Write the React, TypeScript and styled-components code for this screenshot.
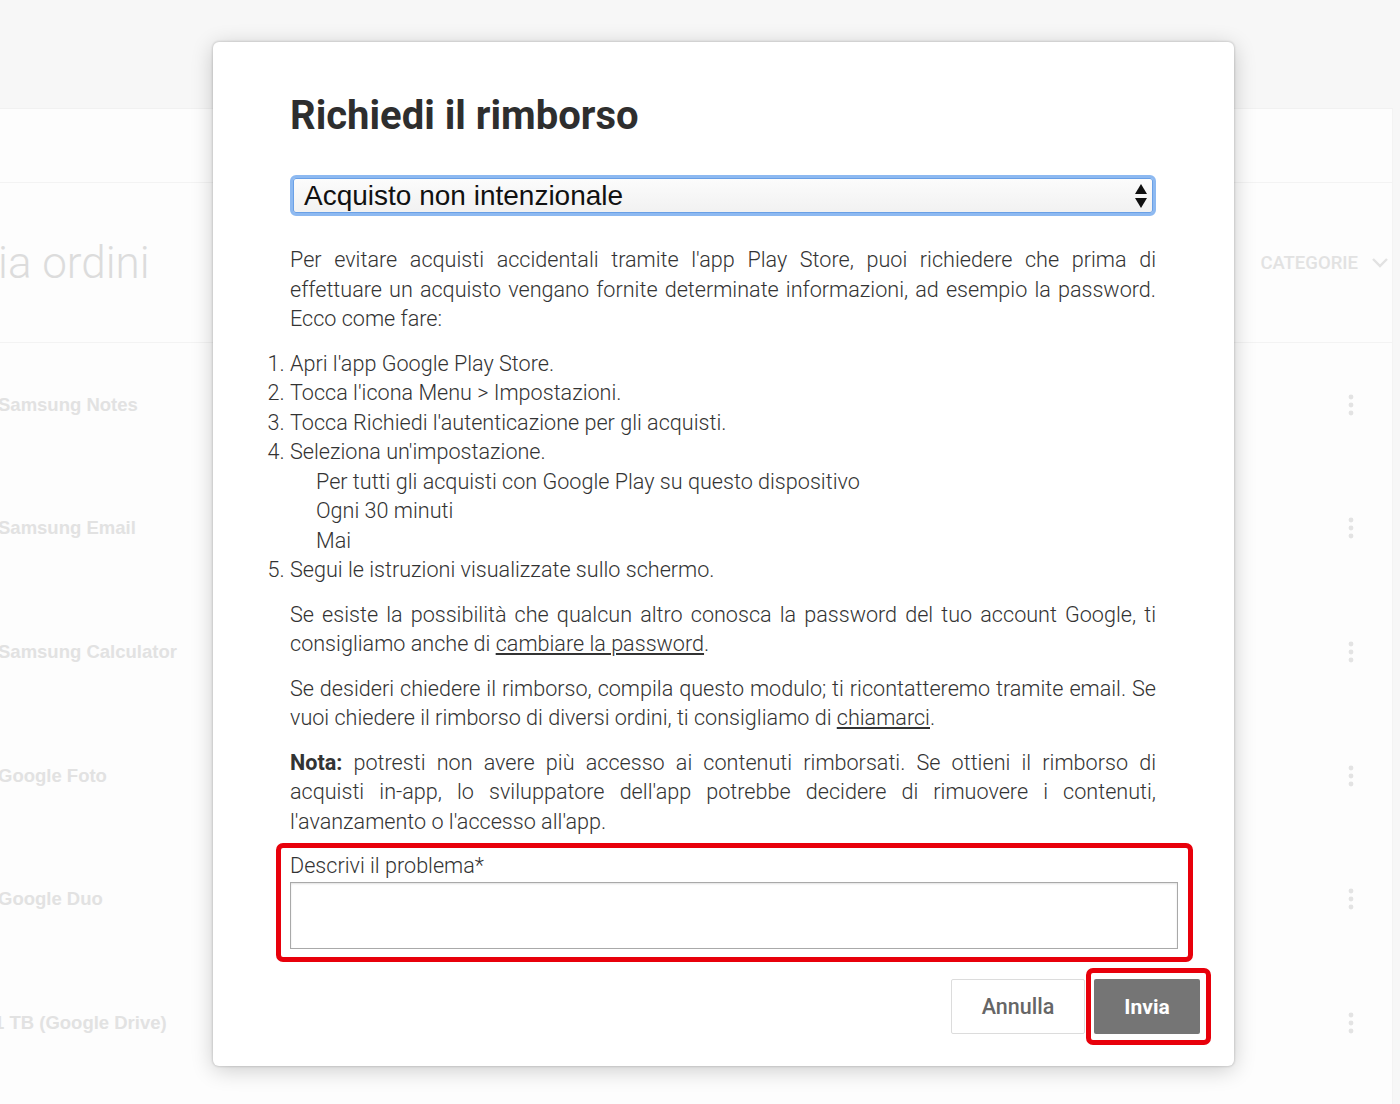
import React from 'react';
import styled, { createGlobalStyle } from 'styled-components';

const orders = [
  'Samsung Notes',
  'Samsung Email',
  'Samsung Calculator',
  'Google Foto',
  'Google Duo',
  '1 TB (Google Drive)',
];

const Global = createGlobalStyle`
  html, body {
    margin: 0;
    padding: 0;
    background: #f7f7f7;
    font-family: Roboto, 'Noto Sans', sans-serif;
    overflow: hidden;
  }
  * { box-sizing: border-box; }
`;

const MoreDots = () => (
  <svg width="8" height="24" viewBox="0 0 8 24">
    <circle cx="4" cy="4" r="2.4" fill="#e3e3e3" />
    <circle cx="4" cy="12" r="2.4" fill="#e3e3e3" />
    <circle cx="4" cy="20" r="2.4" fill="#e3e3e3" />
  </svg>
);

const SelectArrows = () => (
  <svg width="14" height="26" viewBox="0 0 14 26">
    <path d="M7 1 L13 11 L1 11 Z" fill="#111" />
    <path d="M1 15 L13 15 L7 25 Z" fill="#111" />
  </svg>
);

const App: React.FC = () => {
  return (
    <S.Page>
      <Global />
      <S.TopBar />
      <S.Card>
        <S.CardBand />
        <S.TitleRow>
          <S.PageTitle>ia ordini</S.PageTitle>
          <S.CategoryFilter>
            CATEGORIE
            <svg width="18" height="12" viewBox="0 0 18 12">
              <path d="M2 2 L9 9 L16 2" stroke="#e2e2e2" strokeWidth="2.4" fill="none" />
            </svg>
          </S.CategoryFilter>
        </S.TitleRow>
        {orders.map((name) => (
          <S.OrderRow key={name}>
            <S.AppName $cut={name.startsWith('1 TB')}>{name}</S.AppName>
            <MoreDots />
          </S.OrderRow>
        ))}
      </S.Card>

      <S.Modal>
        <S.Title>Richiedi il rimborso</S.Title>
        <S.SelectBox>
          <span>Acquisto non intenzionale</span>
          <SelectArrows />
        </S.SelectBox>

        <S.Paragraph>
          Per evitare acquisti accidentali tramite l'app Play Store, puoi richiedere che prima di
          effettuare un acquisto vengano fornite determinate informazioni, ad esempio la password.
          Ecco come fare:
        </S.Paragraph>

        <S.Steps>
          <li>Apri l'app Google Play Store.</li>
          <li>Tocca l'icona Menu &gt; Impostazioni.</li>
          <li>Tocca Richiedi l'autenticazione per gli acquisti.</li>
          <li>
            Seleziona un'impostazione.
            <S.Options>
              <li>Per tutti gli acquisti con Google Play su questo dispositivo</li>
              <li>Ogni 30 minuti</li>
              <li>Mai</li>
            </S.Options>
          </li>
          <li>Segui le istruzioni visualizzate sullo schermo.</li>
        </S.Steps>

        <S.Paragraph>
          Se esiste la possibilità che qualcun altro conosca la password del tuo account Google, ti
          consigliamo anche di <S.Link>cambiare la password</S.Link>.
        </S.Paragraph>
        <S.Paragraph>
          Se desideri chiedere il rimborso, compila questo modulo; ti ricontatteremo tramite email. Se
          vuoi chiedere il rimborso di diversi ordini, ti consigliamo di <S.Link>chiamarci</S.Link>.
        </S.Paragraph>
        <S.Paragraph>
          <strong>Nota:</strong> potresti non avere più accesso ai contenuti rimborsati. Se ottieni il
          rimborso di acquisti in-app, lo sviluppatore dell'app potrebbe decidere di rimuovere i
          contenuti, l'avanzamento o l'accesso all'app.
        </S.Paragraph>

        <S.FieldHighlight>
          <S.FieldLabel>Descrivi il problema*</S.FieldLabel>
          <S.TextArea />
        </S.FieldHighlight>

        <S.Footer>
          <S.CancelButton>Annulla</S.CancelButton>
          <S.ButtonHighlight>
            <S.SubmitButton>Invia</S.SubmitButton>
          </S.ButtonHighlight>
        </S.Footer>
      </S.Modal>
    </S.Page>
  );
};

const S = {
  Page: styled.div`
    width: 1400px;
    height: 1104px;
    position: relative;
    overflow: hidden;
    display: flex;
    flex-direction: column;
  `,
  TopBar: styled.div`
    height: 108px;
    flex-shrink: 0;
    background: #f7f7f7;
  `,
  Card: styled.div`
    flex: 1;
    margin-right: 7px;
    background: #fdfdfd;
    border-top: 1px solid #f1f1f1;
    border-right: 1px solid #f3f3f3;
  `,
  CardBand: styled.div`
    height: 74px;
    border-bottom: 1px solid #f3f3f3;
  `,
  TitleRow: styled.div`
    height: 160px;
    display: flex;
    align-items: center;
    justify-content: space-between;
    padding-right: 3px;
    border-bottom: 1px solid #f3f3f3;
  `,
  PageTitle: styled.div`
    font-size: 44px;
    font-weight: 300;
    color: #dcdcdc;
    margin-left: -2px;
  `,
  CategoryFilter: styled.div`
    display: flex;
    align-items: center;
    gap: 13px;
    font-size: 18.5px;
    font-weight: 500;
    color: #e2e2e2;
  `,
  OrderRow: styled.div`
    height: 123.6px;
    display: flex;
    align-items: center;
    justify-content: space-between;
    padding-right: 37px;
  `,
  AppName: styled.div<{ $cut?: boolean }>`
    font-family: 'Liberation Sans', Arial, sans-serif;
    font-weight: 700;
    font-size: 18.5px;
    color: #e2e2e2;
    margin-left: ${(p) => (p.$cut ? '-6px' : '-2px')};
  `,
  Modal: styled.div`
    position: absolute;
    left: 213px;
    top: 42px;
    width: 1021px;
    height: 1024px;
    background: #fff;
    border-radius: 6px;
    box-shadow: 0 0 2px 1px rgba(0, 0, 0, 0.12), 0 4px 22px rgba(0, 0, 0, 0.2);
    padding: 51px 78px 21px 77px;
    display: flex;
    flex-direction: column;
    color: #333;
  `,
  Title: styled.h1`
    margin: 0;
    font-size: 40px;
    line-height: 46px;
    font-weight: 700;
    color: #2e2e2e;
  `,
  SelectBox: styled.div`
    margin-top: 36px;
    height: 41px;
    display: flex;
    align-items: center;
    justify-content: space-between;
    padding: 0 5px 0 11px;
    border: 3px solid #8db9f1;
    border-radius: 6px;
    background: linear-gradient(#fcfcfc, #f1f1f1);
    box-shadow: inset 0 0 0 1px #6aa0e6;
    font-family: 'Liberation Sans', Arial, sans-serif;
    font-size: 28px;
    color: #111;
  `,
  Paragraph: styled.p`
    margin: 15px 0 0;
    font-size: 21.6px;
    font-weight: 300;
    line-height: 29.5px;
    text-align: justify;

    &:first-of-type {
      margin-top: 29px;
    }

    strong {
      font-weight: 700;
    }
  `,
  Steps: styled.ol`
    margin: 15px 0 0;
    padding: 0;
    font-size: 21.6px;
    font-weight: 300;
    line-height: 29.5px;
  `,
  Options: styled.ul`
    margin: 0;
    padding-left: 26px;
    list-style: none;
  `,
  Link: styled.a`
    color: inherit;
    text-decoration: underline;
    text-underline-offset: 2px;
  `,
  FieldHighlight: styled.div`
    margin: 7px -37px 0 -14px;
    border: 5px solid #e8000b;
    border-radius: 7px;
    padding: 5px 10px 8px 9px;
  `,
  FieldLabel: styled.label`
    display: block;
    font-size: 21.6px;
    font-weight: 300;
    line-height: 26px;
    color: #333;
  `,
  TextArea: styled.div`
    margin-top: 3px;
    height: 67px;
    border: 1px solid #a9a9a9;
    box-shadow: inset 0 1px 2px rgba(0, 0, 0, 0.12);
    background: #fff;
  `,
  Footer: styled.div`
    margin: 6px -55px 0 0;
    display: flex;
    justify-content: flex-end;
    align-items: center;
    gap: 1px;
  `,
  CancelButton: styled.button`
    width: 134px;
    height: 55px;
    border: 1px solid #dcdcdc;
    border-radius: 2px;
    background: #fff;
    font-family: Roboto, sans-serif;
    font-size: 21.5px;
    font-weight: 500;
    color: #666;
  `,
  ButtonHighlight: styled.div`
    border: 5px solid #e8000b;
    border-radius: 7px;
    padding: 6px 6px 6px 3px;
    display: flex;
  `,
  SubmitButton: styled.button`
    width: 106px;
    height: 55px;
    border: none;
    border-radius: 2px;
    background: #757575;
    font-family: Roboto, sans-serif;
    font-size: 21px;
    font-weight: 700;
    color: #fff;
  `,
};

export default App;
